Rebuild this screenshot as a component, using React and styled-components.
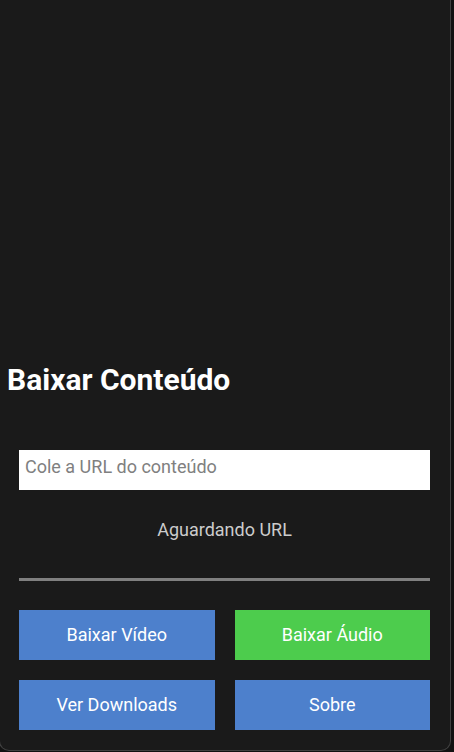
import React from "react";
import styled, { createGlobalStyle } from "styled-components";

const GlobalStyle = createGlobalStyle`
  * {
    box-sizing: border-box;
  }

  body {
    margin: 0;
    background: #121212;
    font-family: Roboto, "Liberation Sans", sans-serif;
    font-size: 18px;
    line-height: 24px;
    overflow-x: hidden;
  }
`;

const Window = styled.main`
  display: flex;
  flex-direction: column;
  justify-content: flex-end;
  min-height: calc(100vh - 1px);
  margin: 0 3px 0 -1px;
  padding: 20px 20px 20px 19px;
  background: #1a1a1a;
  border: 1px solid #404040;
  border-top: none;
  border-radius: 0 0 10px 10px;
`;

const Title = styled.h1`
  margin: 0 -12px 52px;
  color: #ffffff;
  font-size: 30px;
  font-weight: 700;
  line-height: 36px;
`;

const Form = styled.form`
  display: flex;
  flex-direction: column;
`;

const UrlInput = styled.input`
  width: 100%;
  height: 40px;
  padding: 5px 6px 13px;
  border: none;
  border-radius: 0;
  outline: none;
  background: #ffffff;
  color: #000000;
  font: inherit;
  line-height: 22px;

  &::placeholder {
    color: #808080;
    opacity: 1;
  }
`;

const Status = styled.p`
  margin: 28px 0 36px;
  color: #cccccc;
  text-align: center;
`;

const Progress = styled.progress`
  display: block;
  width: 100%;
  height: 3px;
  margin-bottom: 29px;
  border: none;
  appearance: none;
  background: #808080;

  &::-webkit-progress-bar {
    background: #808080;
  }

  &::-webkit-progress-value {
    background: #4d80cc;
  }
`;

const Actions = styled.div`
  display: grid;
  grid-template-columns: 1fr 1fr;
  gap: 20px;
`;

const ActionButton = styled.button`
  height: 50px;
  padding: 0;
  border: none;
  border-radius: 0;
  background: ${({ $variant }) => ($variant === "audio" ? "#4dcc4d" : "#4d80cc")};
  color: #ffffff;
  font: inherit;
  cursor: pointer;
`;

const actions = [
  { label: "Baixar Vídeo" },
  { label: "Baixar Áudio", variant: "audio" },
  { label: "Ver Downloads" },
  { label: "Sobre" },
];

export default function App() {
  return (
    <>
      <GlobalStyle />
      <Window>
        <Title>Baixar Conteúdo</Title>
        <Form onSubmit={(event) => event.preventDefault()}>
          <UrlInput
            type="text"
            placeholder="Cole a URL do conteúdo"
            aria-label="Cole a URL do conteúdo"
          />
          <Status role="status">Aguardando URL</Status>
          <Progress value={0} max={100} aria-label="Progresso" />
          <Actions>
            {actions.map(({ label, variant }) => (
              <ActionButton key={label} type="button" $variant={variant}>
                {label}
              </ActionButton>
            ))}
          </Actions>
        </Form>
      </Window>
    </>
  );
}
